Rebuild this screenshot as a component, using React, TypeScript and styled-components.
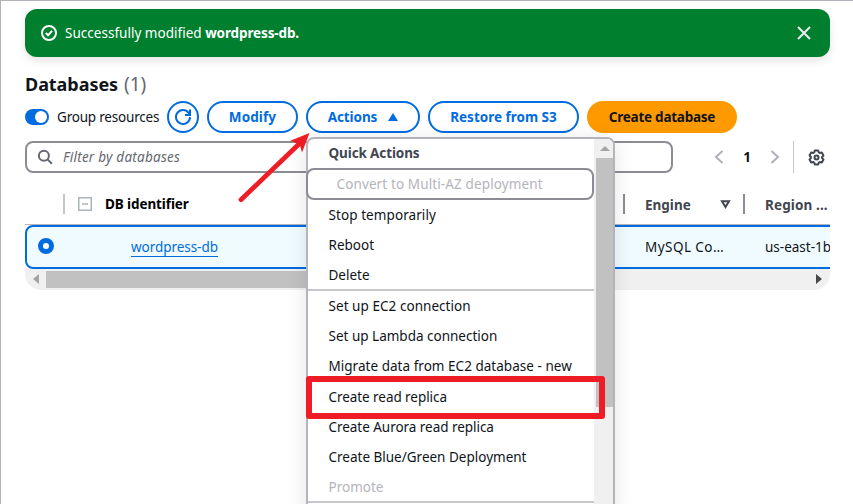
import React from "react";
import styled, { createGlobalStyle } from "styled-components";

const blue = "#006ce0";
const ink = "#0f141a";
const slate = "#424650";

const GlobalStyle = createGlobalStyle`
  *, *::before, *::after { box-sizing: border-box; }
  body {
    margin: 0;
    overflow: hidden;
    background: #fff;
    color: ${ink};
    font: 13.5px/20px "Noto Sans", "Open Sans", sans-serif;
  }
`;

const Page = styled.main`
  height: 504px;
  padding: 8px 23px 0 24px;
  border-top: 1px solid #b2b2ba;
  border-left: 1px solid #b2b2ba;
  overflow: hidden;
`;

const Label = styled.span<{ $track?: number }>`
  letter-spacing: ${(p) => p.$track ?? 0}px;
  white-space: pre;
`;

const Flash = styled.div`
  display: flex;
  align-items: center;
  height: 48px;
  padding: 0 18px 0 16px;
  gap: 8px;
  border-radius: 12px;
  background: #00802f;
  color: #fff;
  box-shadow: 0 4px 8px rgba(0, 7, 22, 0.1);
  > svg:last-child { margin-left: auto; }
`;

const Strong = styled.strong`
  font-weight: 700;
  letter-spacing: -0.12px;
`;

const Heading = styled.h1`
  display: flex;
  gap: 6px;
  height: 24px;
  margin: 15px 0 5px;
  font-size: 18px;
  line-height: 24px;
  font-weight: 700;
  letter-spacing: -0.05px;
`;

const Counter = styled.span`
  color: #656871;
  font-size: 19px;
  font-weight: 400;
`;

const Toolbar = styled.div`
  display: flex;
  align-items: center;
  gap: 8px;
  height: 32px;
`;

const Toggle = styled.span`
  display: flex;
  justify-content: flex-end;
  width: 24px;
  height: 16px;
  padding: 2px;
  border-radius: 8px;
  background: ${blue};
  &::after {
    content: "";
    width: 12px;
    height: 12px;
    border-radius: 50%;
    background: #fff;
  }
`;

const ToggleLabel = styled(Label)`
  width: 102px;
`;

const Button = styled.button<{ $width: number; $primary?: boolean }>`
  display: flex;
  align-items: center;
  justify-content: center;
  flex: none;
  gap: 11px;
  width: ${(p) => p.$width}px;
  height: 32px;
  padding: 0 0 1px;
  border: 2px solid ${(p) => (p.$primary ? "#ff9900" : blue)};
  border-radius: 16px;
  background: ${(p) => (p.$primary ? "#ff9900" : "#fff")};
  color: ${(p) => (p.$primary ? ink : blue)};
  font: inherit;
  font-weight: 700;
`;

const IconButton = styled(Button)`
  padding: 0;
`;

const FilterBar = styled.div`
  display: flex;
  align-items: center;
  height: 32px;
  margin-top: 8px;
`;

const Search = styled.div`
  display: flex;
  align-items: center;
  gap: 10px;
  width: 648px;
  height: 32px;
  padding-left: 10px;
  border: 2px solid #8c8c94;
  border-radius: 8px;
  color: #656871;
  font-style: italic;
`;

const Pager = styled.div`
  display: flex;
  align-items: center;
  justify-content: space-between;
  width: 66px;
  margin-left: 41px;
  font-weight: 700;
`;

const Settings = styled.div`
  display: flex;
  align-items: center;
  justify-content: flex-end;
  width: 32px;
  height: 32px;
  margin-left: 13px;
  border-left: 1px solid #c6c6cd;
`;

const Table = styled.section`
  width: 805px;
  margin-top: 11px;
  border-radius: 0 0 16px 16px;
  overflow: hidden;
`;

const Row = styled.div`
  display: grid;
  grid-template-columns: 40px 560px 120px 85px;
  align-items: center;
`;

const HeaderRow = styled(Row)`
  height: 41px;
  border-bottom: 1px solid #b4b4bb;
  font-weight: 700;
`;

const HeaderCell = styled.div<{ $rule?: string }>`
  display: flex;
  align-items: center;
  height: 20px;
  padding: 2px 0 0 20px;
  color: ${slate};
  border-right: ${(p) => (p.$rule ? `2px solid ${p.$rule}` : "none")};
`;

const IdentifierCell = styled(HeaderCell)`
  gap: 13px;
  padding: 0 0 0 13px;
  color: #000;
`;

const SortIcon = styled.svg`
  margin-left: auto;
  margin-right: 12.5px;
  margin-top: -1px;
`;

const SelectedRow = styled(Row)`
  height: 44px;
  width: 830px;
  border: 2px solid ${blue};
  border-radius: 8px;
  background: #f0fbff;
  grid-template-columns: 38px 560px 120px 85px;
`;

const Cell = styled.div<{ $indent?: number }>`
  padding-left: ${(p) => p.$indent ?? 20}px;
  white-space: nowrap;
`;

const Radio = styled.span`
  display: block;
  width: 16px;
  height: 16px;
  margin-left: 11px;
  margin-top: -2px;
  border: 5px solid ${blue};
  border-radius: 50%;
  background: #fff;
`;

const Link = styled.a`
  display: inline-block;
  height: 20px;
  border-bottom: 1px solid ${blue};
  color: ${blue};
  letter-spacing: -0.05px;
`;

const HorizontalScroll = styled.div`
  display: flex;
  align-items: center;
  gap: 7px;
  height: 21px;
  padding: 0 8px 1px 8px;
  background: #f0f0f0;
  > svg:last-child { margin-left: auto; }
`;

const HorizontalThumb = styled.div`
  width: 400px;
  height: 17px;
  background: #c1c1c1;
`;

const MenuAnchor = styled.div`
  position: relative;
`;

const Menu = styled.div`
  position: absolute;
  z-index: 1;
  top: 36px;
  left: 0;
  display: flex;
  width: 309px;
  height: 380px;
  border: 2px solid #b4b4bb;
  border-radius: 8px;
  background: #fff;
  box-shadow: 0 4px 20px 1px rgba(0, 7, 22, 0.1);
`;

const MenuList = styled.div`
  width: 286px;
`;

const MenuHeader = styled.div`
  height: 29px;
  padding: 4px 20.5px;
  color: ${slate};
  font-weight: 700;
`;

const MenuItem = styled.div<{ $disabled?: boolean; $height?: number }>`
  height: ${(p) => p.$height ?? 30}px;
  padding: 5px 20.5px 0;
  color: ${(p) => (p.$disabled ? "#b4b4bb" : ink)};
  white-space: nowrap;
`;

const FocusedItem = styled.div`
  width: 288px;
  height: 32px;
  margin-left: -2px;
  padding: 4px 28.5px;
  border: 2px solid #8c8c94;
  border-radius: 8px;
  color: #b4b4bb;
`;

const Divider = styled.div`
  height: 2px;
  background: #c6c6cd;
`;

const HighlightedItem = styled(MenuItem)`
  position: relative;
  margin-top: 1px;
  &::after {
    content: "";
    position: absolute;
    top: -6px;
    left: -2px;
    width: 299px;
    height: 43px;
    border: 6px solid #ee1c25;
    border-radius: 3px;
  }
`;

const VerticalScroll = styled.div`
  width: 19px;
  padding: 7px 0 0 2px;
  border-radius: 0 6px 0 0;
  background: #f0f0f0;
  > svg { display: block; margin: 0 0 7px 4px; }
`;

const VerticalThumb = styled.div`
  height: 249px;
  background: #c1c1c1;
`;

const Pointer = styled.svg`
  position: absolute;
  z-index: 2;
  top: 31px;
  left: -70px;
`;

const StatusIcon = () => (
  <svg width="16" height="16" viewBox="0 0 16 16" fill="none" stroke="#fff" strokeWidth="2">
    <circle cx="8" cy="8" r="7" />
    <path d="m4.8 8 2.3 2.2 4-4.4" />
  </svg>
);

const CloseIcon = () => (
  <svg width="16" height="16" viewBox="0 0 16 16" stroke="#e9ebed" strokeWidth="2">
    <path d="m2 2 12 12M14 2 2 14" />
  </svg>
);

const RefreshIcon = () => (
  <svg width="16" height="16" viewBox="0 0 16 16" fill="none" stroke={blue} strokeWidth="2">
    <path d="M15 8a7 7 0 1 1-1.4-4.2L15 5.5" />
    <path d="M10 6h5V0.5" />
  </svg>
);

const SearchIcon = () => (
  <svg width="16" height="16" viewBox="0 0 16 16" fill="none" stroke="#656871" strokeWidth="2">
    <circle cx="6.9" cy="6.7" r="5" />
    <path d="m10.5 10.4 4.4 4.3" />
  </svg>
);

const Chevron = ({ d }: { d: string }) => (
  <svg width="10" height="14" viewBox="0 0 10 14" fill="none" stroke="#b0b0b8" strokeWidth="2">
    <path d={d} />
  </svg>
);

const GearIcon = () => (
  <svg width="17" height="17" viewBox="0 0 17 17" fill="none" stroke={slate} strokeWidth="2" strokeLinejoin="round">
    <path d="M6.8 1.5h3.4l.6 2 .9.5 2.1-.5 1.7 2.9L14.1 8v1l1.4 1.6-1.7 2.9-2.1-.5-.9.5-.6 2H6.8l-.6-2-.9-.5-2.1.5-1.7-2.9L2.9 9V8L1.5 6.4l1.7-2.9 2.1.5.9-.5z" />
    <circle cx="8.5" cy="8.5" r="2" />
  </svg>
);

const CollapseIcon = () => (
  <svg width="14" height="14" viewBox="0 0 14 14" fill="none" stroke="#aab7b8">
    <rect x="0.75" y="0.75" width="12.5" height="12.5" strokeWidth="1.5" />
    <path d="M4 7h6" strokeWidth="1.4" />
  </svg>
);

export default function App() {
  return (
    <>
      <GlobalStyle />
      <Page>
        <Flash>
          <StatusIcon />
          <Label $track={0.02}>Successfully modified <Strong>wordpress-db.</Strong></Label>
          <CloseIcon />
        </Flash>
        <Heading>Databases <Counter>(1)</Counter></Heading>
        <Toolbar>
          <Toggle />
          <ToggleLabel $track={-0.2}>Group resources</ToggleLabel>
          <IconButton $width={32} aria-label="Refresh"><RefreshIcon /></IconButton>
          <Button $width={91}><Label $track={0.1}>Modify</Label></Button>
          <MenuAnchor>
            <Button $width={114}>
              <Label $track={-0.1}>Actions</Label>
              <svg width="10" height="8" viewBox="0 0 10 8" fill={blue}><path d="M5 0 10 8H0z" /></svg>
            </Button>
            <Menu>
              <MenuList>
                <MenuHeader><Label $track={-0.12}>Quick Actions</Label></MenuHeader>
                <FocusedItem><Label $track={0.12}>Convert to Multi-AZ deployment</Label></FocusedItem>
                <MenuItem><Label $track={0.08}>Stop temporarily</Label></MenuItem>
                <MenuItem>Reboot</MenuItem>
                <MenuItem $height={29}>Delete</MenuItem>
                <Divider />
                <MenuItem><Label $track={0.05}>Set up EC2 connection</Label></MenuItem>
                <MenuItem>Set up Lambda connection</MenuItem>
                <MenuItem><Label $track={0.03}>Migrate data from EC2 database - new</Label></MenuItem>
                <HighlightedItem><Label $track={-0.06}>Create read replica</Label></HighlightedItem>
                <MenuItem><Label $track={-0.04}>Create Aurora read replica</Label></MenuItem>
                <MenuItem>Create Blue/Green Deployment</MenuItem>
                <MenuItem $disabled $height={29}>Promote</MenuItem>
                <Divider />
              </MenuList>
              <VerticalScroll>
                <svg width="10" height="5" viewBox="0 0 10 5" fill="#a3a3a3"><path d="m5 0 5 5H0z" /></svg>
                <VerticalThumb />
              </VerticalScroll>
            </Menu>
            <Pointer width="76" height="72" viewBox="0 0 76 72">
              <path d="M5 67.7 63 12" stroke="#ee1c25" strokeWidth="4.8" strokeLinecap="round" />
              <path d="M73.5 1 54.3 8.700 61 11.500 64 13.500 66 20.500z" fill="#ee1c25" />
            </Pointer>
          </MenuAnchor>
          <Button $width={151}><Label $track={0}>Restore from S3</Label></Button>
          <Button $width={150} $primary><Label $track={-0.25}>Create database</Label></Button>
        </Toolbar>
        <FilterBar>
          <Search><SearchIcon /><Label $track={0.25}>Filter by databases</Label></Search>
          <Pager>
            <Chevron d="M8.5 1 2 7l6.5 6" />
            <span>1</span>
            <Chevron d="M1.5 1 8 7l-6.5 6" />
          </Pager>
          <Settings><GearIcon /></Settings>
        </FilterBar>
        <Table>
          <HeaderRow>
            <HeaderCell $rule="#c6c6cd" />
            <IdentifierCell $rule="#8c8c94"><CollapseIcon /><Label $track={-0.1}>DB identifier</Label></IdentifierCell>
            <HeaderCell $rule="#8c8c94">
              <Label>Engine</Label>
              <SortIcon width="11" height="9" viewBox="0 0 11 9" fill="none" stroke={slate} strokeWidth="2">
                <path d="M2 1.2h7L5.500 7z" />
              </SortIcon>
            </HeaderCell>
            <HeaderCell><Label $track={0.12}>Region ...</Label></HeaderCell>
          </HeaderRow>
          <SelectedRow>
            <Radio />
            <Cell $indent={66}><Link>wordpress-db</Link></Cell>
            <Cell><Label $track={0.45}>MySQL Co…</Label></Cell>
            <Cell>us-east-1b</Cell>
          </SelectedRow>
          <HorizontalScroll>
            <svg width="6" height="10" viewBox="0 0 6 10" fill="#a3a3a3"><path d="M6 0v10L0 5z" /></svg>
            <HorizontalThumb />
            <svg width="6" height="10" viewBox="0 0 6 10" fill="#484848"><path d="M0 0v10l6-5z" /></svg>
          </HorizontalScroll>
        </Table>
      </Page>
    </>
  );
}
